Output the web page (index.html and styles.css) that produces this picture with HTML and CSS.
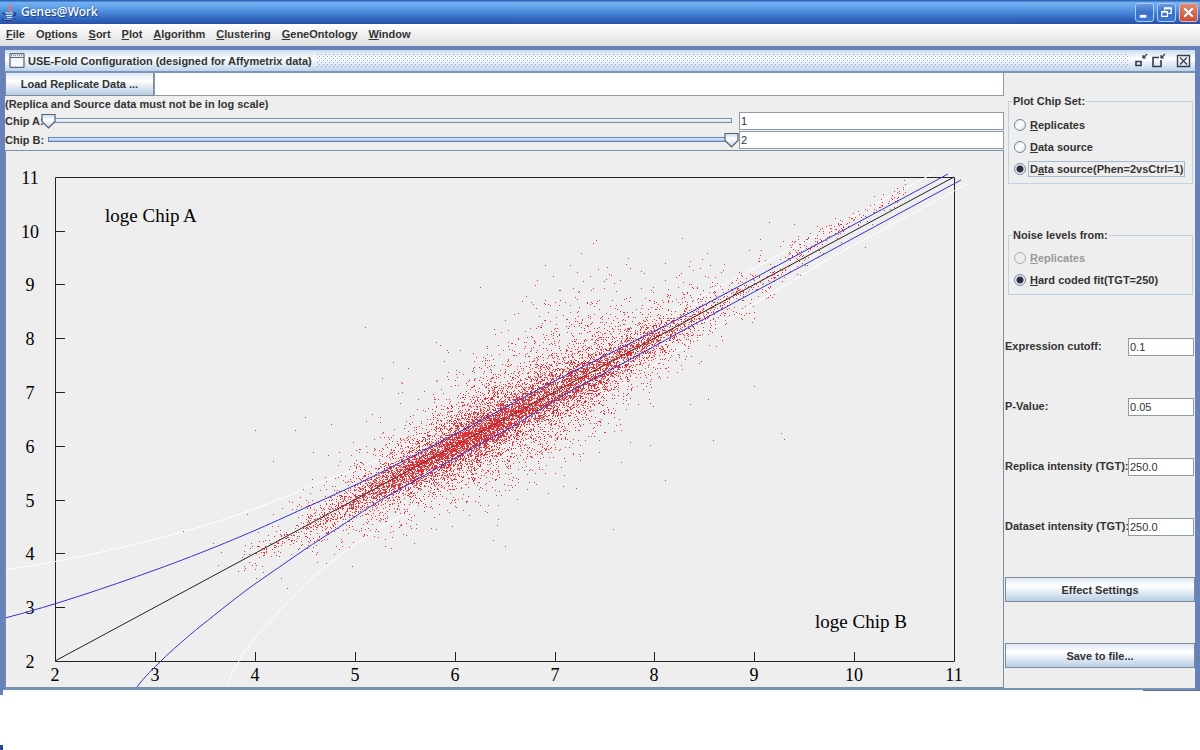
FILE: index.html
```html
<!DOCTYPE html>
<html lang="en">
<head>
<meta charset="utf-8">
<title>Genes@Work</title>
<link rel="stylesheet" href="styles.css">
</head>
<body>
<header class="titlebar">
  <svg class="java" viewBox="0 0 16 18" width="16" height="18" aria-hidden="true">
    <path d="M8 1c2 2-3 3-1 6M10 4c-3 2 0 2-2 5" fill="none" stroke="#e8756a" stroke-width="1.5"/>
    <path d="M3 10h8M4 12.500h6M5 14.500h5M2 17h11" stroke="#dfe3f4" stroke-width="1.200"/>
    <path d="M11 10c4-1 3 3 0 3M2 9.500c-2 1 0 2 2 1.500M1 16c0 2 10 2 13 0" fill="none" stroke="#27327c" stroke-width="1.200"/>
  </svg>
  <h1 class="app-name">Genes@Work</h1>
  <div class="win-buttons">
    <button class="win" aria-label="Minimize"><svg viewBox="0 0 18 18"><path d="M4 13h7" stroke="#fff" stroke-width="3"/></svg></button>
    <button class="win" aria-label="Restore"><svg viewBox="0 0 18 18"><path d="M7 7V4h7v6h-3M7 5h7M4 8h6v5H4zM4 8.500h6" fill="none" stroke="#fff" stroke-width="1.300"/></svg></button>
    <button class="win close" aria-label="Close"><svg viewBox="0 0 18 18"><path d="M4.500 4.500l9 9M13.500 4.500l-9 9" stroke="#fff" stroke-width="2.200"/></svg></button>
  </div>
</header>
<nav class="menu">
  <a href="#"><u>F</u>ile</a><a href="#">O<u>p</u>tions</a><a href="#"><u>S</u>ort</a><a href="#"><u>P</u>lot</a><a href="#"><u>A</u>lgorithm</a><a href="#"><u>C</u>lustering</a><a href="#"><u>G</u>eneOntology</a><a href="#"><u>W</u>indow</a>
</nav>
<main class="desktop">
  <section class="frame">
    <header class="frame-bar">
      <svg width="16" height="15" viewBox="0 0 16 15" aria-hidden="true"><rect x="1" y=".5" width="14" height="14" rx="1" fill="#f5f8fd" stroke="#5f6b7a" stroke-width="1.300"/><path d="M2 2.500h12" stroke="#7090b8" stroke-width="1.500" stroke-dasharray="1 1"/><path d="M1 4.500h14" stroke="#5f6b7a"/></svg>
      <h2 class="frame-title">USE-Fold Configuration (designed for Affymetrix data)</h2>
      <span class="grip"></span>
      <button class="tool" aria-label="Iconify"><svg viewBox="0 0 16 16"><path d="M3 8.500h5v4H3z" fill="none" stroke="#333d4b" stroke-width="1.600"/><path d="M14 1l-4 4M10 2v3h3" fill="none" stroke="#333d4b" stroke-width="1.200"/></svg></button>
      <button class="tool" aria-label="Maximize"><svg viewBox="0 0 16 16"><path d="M9 4.500H3v9h8V7" fill="none" stroke="#333d4b" stroke-width="1.600"/><path d="M15 1l-4 4M11 2v3h3" fill="none" stroke="#333d4b" stroke-width="1.200"/></svg></button>
      <button class="tool last" aria-label="Close frame"><svg viewBox="0 0 16 16"><path d="M2.500 2.500h12v11h-12z" fill="none" stroke="#333d4b" stroke-width="1.400"/><path d="M5 4.500l7 7M12 4.500l-7 7" stroke="#333d4b" stroke-width="1.300"/></svg></button>
    </header>
    <div class="body">
      <div class="left">
        <div class="load">
          <button class="btn">Load Replicate Data ...</button>
          <input type="text" class="text" aria-label="Replicate data file">
        </div>
        <p class="note">(Replica and Source data must not be in log scale)</p>
        <div class="chip">
          <label for="chipA">Chip A:</label>
          <input id="chipA" class="slider" type="range" min="1" max="2" value="1">
          <input type="text" class="text" value="1" aria-label="Chip A number">
        </div>
        <div class="chip">
          <label for="chipB">Chip B:</label>
          <input id="chipB" class="slider filled" type="range" min="1" max="2" value="2">
          <input type="text" class="text" value="2" aria-label="Chip B number">
        </div>
        <div class="plot">
          <svg viewBox="6 151 997 536" role="img" aria-label="Scatter plot of loge Chip A against loge Chip B">
            <path class="axis" d="M55.500 177.500H954.500V661.500H55.500Z"/>
            <g id="ticks"></g>
            <text class="name" x="105" y="222">loge Chip A</text>
            <text class="name" x="815" y="628">loge Chip B</text>
            <path class="ink" d="M55 661L954 177"/>
            <path class="outer" d="M5 570C40 565 80 557 115 549S200 528 240 514S310 486 340 475S380 459 440 429L700 297L934 173"/>
            <path class="outer" d="M226 687C232 672 243 652 255 638S300 588 320 571S372 532 400 516S450 484 500 458L700 337L830 258L967 184"/>
            <path id="dots" class="dots"/>
            <path class="inner" d="M5 618C55 605 105 588 155 570S250 533 285 517S348 489 380 473S490 416 530 394S645 337 680 318L948 174"/>
            <path class="inner" d="M137 687C145 676 154 668 162 660S188 636 202 625S240 594 262 579S306 548 330 533S369 506 400 489S470 449 497 435S553 400 580 386S648 350 680 332L961 180"/>
          </svg>
        </div>
      </div>
      <aside class="right">
        <fieldset class="group">
          <legend>Plot Chip Set:</legend>
          <label><input type="radio" name="set"><span><u>R</u>eplicates</span></label>
          <label><input type="radio" name="set"><span><u>D</u>ata source</span></label>
          <label><input type="radio" name="set" checked><span class="focused">D<u>a</u>ta source(Phen=2vsCtrl=1)</span></label>
        </fieldset>
        <fieldset class="group noise">
          <legend>Noise levels from:</legend>
          <label class="off"><input type="radio" name="noise" disabled><span><u>R</u>eplicates</span></label>
          <label><input type="radio" name="noise" checked><span><u>H</u>ard coded fit(TGT=250)</span></label>
        </fieldset>
        <div class="fields">
          <label for="cut">Expression cutoff:</label><input id="cut" type="text" class="text" value="0.1">
          <label for="pv">P-Value:</label><input id="pv" type="text" class="text" value="0.05">
          <label for="rep">Replica intensity (TGT):</label><input id="rep" type="text" class="text" value="250.0">
          <label for="dat">Dataset intensity (TGT):</label><input id="dat" type="text" class="text" value="250.0">
        </div>
        <div class="actions">
          <button class="btn">Effect Settings</button>
          <button class="btn">Save to file...</button>
        </div>
      </aside>
    </div>
  </section>
</main>
<footer class="below"><i class="stub"></i><i class="edge"></i><i class="corner"></i></footer>
<script src="plot.js"></script>
</body>
</html>
```
FILE: plot.js
```javascript
// Axis ticks and labels
const NS = 'http://www.w3.org/2000/svg';
const ticks = document.getElementById('ticks');
function add(name, attrs, text) {
  const el = document.createElementNS(NS, name);
  for (const k in attrs) el.setAttribute(k, attrs[k]);
  if (text) el.textContent = text;
  ticks.appendChild(el);
}
for (let v = 2; v <= 11; v++) {
  const x = Math.round(55 + (v - 2) * 99.9);
  const y = Math.round(661 - (v - 2) * 53.8);
  add('text', { x: x, y: 681, class: 'num' }, String(v));
  add('text', { x: 30, y: y + 7, class: 'num' }, String(v));
  if (v > 2 && v < 11) {
    add('path', { class: 'axis', d: `M${x + 0.5} 652V661M56 ${y + 0.5}H65` });
  }
}

// Expression values: a log-normal-like cloud along the diagonal
let seed = 20051;
function rnd() {
  seed = (seed + 0x6d2b79f5) | 0;
  let t = Math.imul(seed ^ (seed >>> 15), 1 | seed);
  t = (t + Math.imul(t ^ (t >>> 7), 61 | t)) ^ t;
  return (((t ^ (t >>> 14)) >>> 0) + 0.5) / 4294967296;
}
function gauss() {
  return Math.sqrt(-2 * Math.log(rnd())) * Math.cos(2 * Math.PI * rnd());
}
let d = '';
function dot(x, y) { d += `M${Math.round(x)} ${Math.round(y) + 0.5}h1`; }
for (let i = 0; i < 12500; i++) {
  const g = gauss();
  const x = 498 + g * (g > 0 ? 106 : 88);
  if (x < 235 || x > 905) continue;
  const taper = x > 560 ? Math.max(0.25, 1 - (x - 560) / 400) : Math.max(0.5, 1 - (560 - x) / 560);
  const r = rnd();
  const sd = r < 0.45 ? 12 : r < 0.84 ? 28 : 48;
  let off = gauss() * sd * taper;
  if (off > 0 && r > 0.84) off *= 0.8;
  if (x > 780) off -= (x - 780) * 0.08;
  dot(x, 661 - (x - 55) * 0.5384 + off);
}
// High-intensity tail above the identity line
for (let i = 0; i < 150; i++) {
  const x = 785 + 122 * rnd();
  dot(x, 661 - (x - 55) * 0.5384 - 12 + gauss() * 5);
}
[[480,287],[598,269],[682,238],[365,327],[531,302],[533,304],[630,268],[665,263],
 [255,430],[295,430],[305,417],[331,424],[273,461],[183,531],[213,543],[221,552],
 [238,571],[218,565],[414,543],[497,525],[613,529],[665,480],[708,399],[713,440],
 [754,386],[781,433],[784,439],[815,238],[798,236],[865,247],[690,404],[650,445],
 [382,378],[440,345],[402,392],[560,300],[578,292],[620,280]].forEach(p => dot(p[0], p[1]));
document.getElementById('dots').setAttribute('d', d);
```
FILE: styles.css
```css
* { box-sizing: border-box; }
body {
  margin: 0;
  min-height: 100vh;
  display: flex;
  flex-direction: column;
  background: #fff;
  color: #333;
  font: bold 11px/16px "Liberation Sans", Arial, sans-serif;
}
h1, h2, p { margin: 0; font-size: inherit; }
button, input { font: inherit; color: inherit; margin: 0; padding: 0; }

.titlebar {
  display: flex;
  align-items: center;
  height: 24px;
  padding: 0 2px 0 2px;
  background: linear-gradient(#2b5a9d 0, #3a78cf 5%, #74b0f0 10%, #65a5ec 25%, #4584d4 55%, #3165bd 80%, #2950a8 100%);
}
.app-name {
  flex: 1;
  padding-left: 3px;
  color: #fff;
  font: 500 12px/20px "Noto Sans", sans-serif;
  text-shadow: 1px 1px 1px #1d3c86;
}
.win-buttons { display: flex; gap: 3px; }
.win {
  width: 19px;
  height: 19px;
  border: 1px solid #a9cdf5;
  border-radius: 3px;
  background: linear-gradient(#6d9be0, #3a6fc8 50%, #3b78d4);
}
.win svg { display: block; width: 17px; height: 17px; }
.close { background: linear-gradient(#e08a74, #cb4f34); border-color: #e5b8b8; }

.menu {
  display: flex;
  gap: 11px;
  height: 22px;
  padding: 2px 6px 0;
  background: linear-gradient(#fff, #dedede);
}
.menu a { color: inherit; text-decoration: none; }

.desktop { background: #6782bb; padding: 4px 5px 0; }
.frame { background: #eee; border-bottom: 2px solid #7893b8; }
.frame-bar {
  display: flex;
  align-items: center;
  height: 23px;
  padding: 0 3px 0 4px;
  border-bottom: 2px solid #7a96b8;
  background: linear-gradient(#c8dcf0, #fff 40%, #bdd3ea);
}
.frame-title { padding: 0 5px 0 3px; }
.grip {
  flex: 1;
  height: 13px;
  background:
    conic-gradient(from 270deg at 1px 1px, #8fa9c9 90deg, transparent 0) 0 0 / 4px 4px,
    conic-gradient(from 270deg at 1px 1px, #8fa9c9 90deg, transparent 0) 2px 2px / 4px 4px;
}
.tool { border: 0; background: none; width: 17px; height: 16px; }
.tool svg { display: block; width: 16px; height: 16px; }
.tool:first-of-type { margin-left: 4px; }
.last { margin-left: 8px; }

.body { display: grid; grid-template-columns: minmax(0, 1fr) 190px; gap: 1px; }
.btn {
  height: 25px;
  border: 1px solid #7a8a99;
  background: linear-gradient(#dde8f3, #fff 35%, #b8cfe5);
}
.text {
  min-width: 0;
  height: 18px;
  border: 1px solid #8c9bab;
  background: #fff;
  border-radius: 0;
  padding: 0 1px;
  font-weight: normal;
}
.load { display: grid; grid-template-columns: 149px 1fr; }
.load .btn, .load .text { height: 23px; border-top-width: 0; }
.chip {
  display: grid;
  grid-template-columns: 36px minmax(0, 1fr) 265px;
  align-items: center;
  height: 19px;
  white-space: nowrap;
}
.note { height: 15px; }
.slider { appearance: none; width: 100%; height: 16px; background: none; }
.slider::-webkit-slider-runnable-track {
  height: 16px;
  background:
    linear-gradient(#f5f8fb, #d5dfe9) center 6px / calc(100% - 16px) 3px no-repeat,
    linear-gradient(#7a8fa8, #7a8fa8) center 5px / calc(100% - 14px) 5px no-repeat;
}
.filled::-webkit-slider-runnable-track {
  background:
    linear-gradient(#e4eefa, #9fbde0) center 6px / calc(100% - 16px) 3px no-repeat,
    linear-gradient(#6382bf, #6382bf) center 5px / calc(100% - 14px) 5px no-repeat;
}
.slider::-webkit-slider-thumb {
  appearance: none;
  width: 15px;
  height: 16px;
  background: url("data:image/svg+xml,%3Csvg xmlns='http://www.w3.org/2000/svg' viewBox='0 0 15 16'%3E%3Cdefs%3E%3ClinearGradient id='g' x2='0' y2='1'%3E%3Cstop stop-color='%23c8dcf0'/%3E%3Cstop offset='.4' stop-color='%23fff'/%3E%3Cstop offset='1' stop-color='%23bcd2e8'/%3E%3C/linearGradient%3E%3C/defs%3E%3Cpath d='M1 1.500h13v7l-6.500 6.500L1 8.500z' fill='url(%23g)' stroke='%23566270' stroke-width='1.200'/%3E%3C/svg%3E") center no-repeat;
}
.plot { margin-top: 1px; border: 1px solid #7a8fa8; }
.plot svg { display: block; width: 100%; }
.axis, .ink { fill: none; stroke: #222; }
.outer { fill: none; stroke: #fff; }
.inner { fill: none; stroke: #3434c8; }
.dots { fill: none; stroke: #d8141c; stroke-opacity: .85; shape-rendering: crispEdges; }
.num, .name { font: 18px "Liberation Serif", "Times New Roman", serif; fill: #000; }
.name { font-size: 19px; }
.num { text-anchor: middle; }

.right { padding-top: 20px; }
.group {
  margin: 0 2px 0 3px;
  padding: 5px 0 3px 5px;
  border: 1px solid #c3d2e2;
}
.group legend { padding: 0 1px; margin-left: -2px; }
.group label { display: flex; align-items: center; gap: 2px; height: 22px; }
.noise { margin-top: 43px; padding-top: 4px; }
.group input {
  appearance: none;
  width: 12px;
  height: 12px;
  border: 1px solid #74879c;
  border-radius: 50%;
  background: linear-gradient(135deg, #d5e3f1, #fff 50%, #c5d8eb);
}
.group input:checked {
  background: radial-gradient(circle, #27303c 0, #27303c 3px, transparent 4px), #e5eef8;
}
.group input:disabled { border-color: #aaa; background: #eee; }
.group span { padding: 0 1px; border: 1px solid transparent; line-height: 14px; white-space: nowrap; }
.group .focused { border-color: #a5b9d0; }
.off { color: #999; }
.fields {
  display: grid;
  grid-template-columns: minmax(0, 1fr) 66px;
  grid-auto-rows: 18px;
  row-gap: 42px;
  margin: 43px 0 0;
  padding-right: 1px;
  white-space: nowrap;
}
.actions { display: grid; gap: 41px; margin: 41px 0 18px; }

.below {
  flex: 1;
  display: grid;
  grid-template-columns: 3px 1fr 57px;
  align-content: space-between;
}
.stub { height: 5px; background: #6782bb; }
.edge { grid-column: 3; height: 1px; background: #5a6c94; }
.corner { grid-column: 1; height: 5px; background: #27478c; }
```
